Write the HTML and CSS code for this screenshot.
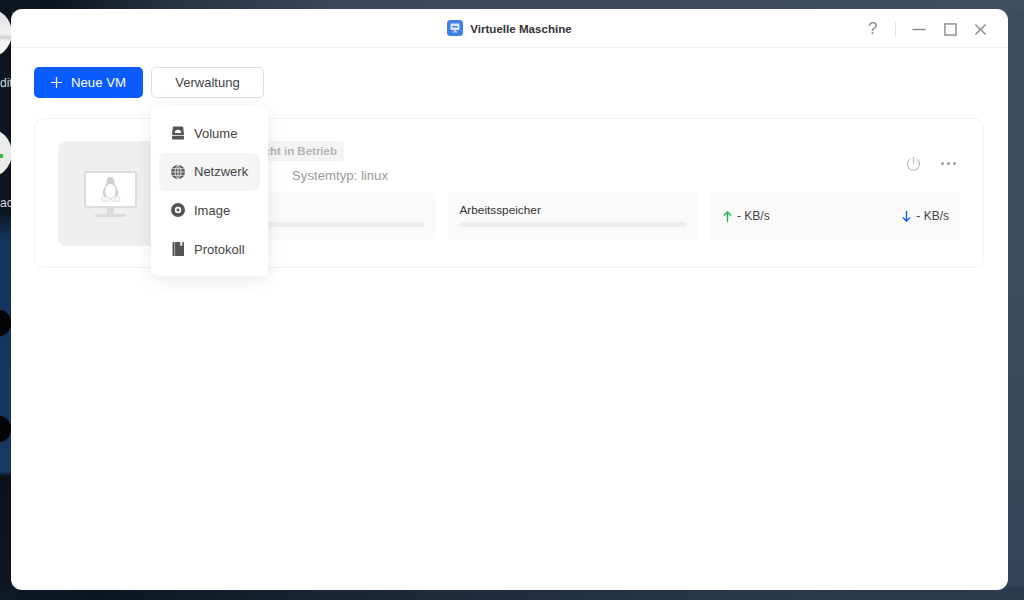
FILE: index.html
```html
<!DOCTYPE html>
<html lang="de">
<head>
<meta charset="utf-8">
<title>Virtuelle Maschine</title>
<link rel="stylesheet" href="styles.css">
</head>
<body>
<div class="desktop">
  <div class="wall-top"></div>
  <div class="wall-bottom"></div>
  <div class="wall-blue"></div>
  <div class="blob blob-a"></div>
  <div class="blob blob-b"></div>
  <div class="app-disc disc-a"></div>
  <span class="app-label label-a">dit</span>
  <div class="app-disc disc-b"><i class="disc-mark"></i></div>
  <span class="app-label label-b">ac</span>

  <main class="window">
    <header class="titlebar">
      <div class="title">
        <svg class="app-icon" viewBox="0 0 16 16"><rect width="16" height="16" rx="3.5" fill="#3d7fe8"/><rect x="3.5" y="3.5" width="9" height="6.5" rx="1" fill="#dbe8fb"/><rect x="5.2" y="6" width="5.6" height="1.4" fill="#3d7fe8"/><rect x="7.2" y="10" width="1.6" height="1.5" fill="#dbe8fb"/><rect x="5.5" y="11.5" width="5" height="1" fill="#dbe8fb"/></svg>
        <span class="title-text">Virtuelle Maschine</span>
      </div>
      <div class="controls">
        <span class="help">?</span>
        <span class="divider"></span>
        <svg class="ctl ctl-min" viewBox="0 0 14 14"><path d="M0 7h14" /></svg>
        <svg class="ctl" viewBox="0 0 14 14"><rect x="1" y="1" width="12" height="12"/></svg>
        <svg class="ctl" viewBox="0 0 14 14"><path d="M1.500 1.500l11 11M12.500 1.500l-11 11"/></svg>
      </div>
    </header>

    <div class="content">
      <div class="toolbar">
        <button class="btn btn-primary"><svg class="plus" viewBox="0 0 12 12"><path d="M6 0v12M0 6h12"/></svg>Neue VM</button>
        <button class="btn btn-plain">Verwaltung</button>
      </div>

      <section class="card">
        <div class="thumb">
          <svg class="monitor" viewBox="0 0 54 46">
            <rect x="1" y="1" width="51" height="35" rx="1.5" fill="#fff" stroke="#dcdcdc" stroke-width="2"/>
            <rect x="23" y="37" width="7" height="6" fill="#dcdcdc"/>
            <rect x="11" y="43" width="31" height="3" rx="1" fill="#dcdcdc"/>
            <path d="M26.500 6c-2.700 0-3.800 2-3.800 4.500 0 2.800-1 3.800-2.200 5.800-1.200 2-1.900 4.300-1.700 6.700l2 4h11.400l2-4c.2-2.400-.5-4.700-1.700-6.700-1.200-2-2.200-3-2.200-5.800C30.300 8 29.200 6 26.500 6z" fill="#d0d0d0"/>
            <ellipse cx="26.500" cy="20.500" rx="5.200" ry="7.500" fill="#fbfbfb"/>
            <ellipse cx="21.500" cy="28" rx="4.600" ry="2.300" fill="#f7f7f7" stroke="#d6d6d6" stroke-width=".8"/>
            <ellipse cx="31.500" cy="28" rx="4.600" ry="2.300" fill="#f7f7f7" stroke="#d6d6d6" stroke-width=".8"/>
          </svg>
        </div>
        <div class="details">
          <div class="top-row">
            <div class="info">
              <span class="tag">Nicht in Betrieb</span>
              <span class="systype">Systemtyp: linux</span>
            </div>
            <div class="actions">
              <svg class="power" viewBox="0 0 16 16"><path d="M8 1v7M4.300 3.300a6.500 6.500 0 1 0 7.400 0"/></svg>
              <span class="more"><i></i><i></i><i></i></span>
            </div>
          </div>
          <div class="stats">
            <div class="stat"><span class="stat-label"></span><span class="bar"></span></div>
            <div class="stat"><span class="stat-label">Arbeitsspeicher</span><span class="bar"></span></div>
            <div class="stat stat-net">
              <span class="rate"><svg class="arrow up" viewBox="0 0 10 12"><path d="M5 12V1M1 5l4-4 4 4"/></svg>- KB/s</span>
              <span class="rate"><svg class="arrow down" viewBox="0 0 10 12"><path d="M5 0v11M1 7l4 4 4-4"/></svg>- KB/s</span>
            </div>
          </div>
        </div>
      </section>
    </div>

    <nav class="menu">
      <a class="menu-item">
        <svg class="mi" viewBox="0 0 14 14"><path d="M2.800 .5h8.400a1 1 0 0 1 1 .9l.8 7.600H1l.8-7.600a1 1 0 0 1 1-.9z" fill="#555"/><rect x="1" y="9.800" width="12" height="3.700" rx=".7" fill="#555"/><path d="M3.800 7a3.200 3.200 0 0 1 6.400 0z" fill="#fff"/></svg>
        Volume
      </a>
      <a class="menu-item is-active">
        <svg class="mi" viewBox="0 0 14 14"><circle cx="7" cy="7" r="7" fill="#555"/><path d="M0 7h14M1.200 3.700h11.600M1.200 10.300h11.600M7 0v14M7 0c-4 3.500-4 10.500 0 14M7 0c4 3.500 4 10.500 0 14" fill="none" stroke="#f5f5f5" stroke-width=".8"/></svg>
        Netzwerk
      </a>
      <a class="menu-item">
        <svg class="mi" viewBox="0 0 14 14"><circle cx="7" cy="7" r="7" fill="#555"/><circle cx="7" cy="7" r="3.200" fill="#fff"/><circle cx="7" cy="7" r="1.400" fill="#555"/></svg>
        Image
      </a>
      <a class="menu-item">
        <svg class="mi" viewBox="0 0 14 14"><rect x="1.500" y="0" width="11.500" height="14" rx=".8" fill="#555"/><path d="M3.600 0v14" stroke="#ddd" stroke-width=".6"/><path d="M9.300 0h2v4l-1-.8-1 .8z" fill="#fff"/></svg>
        Protokoll
      </a>
    </nav>
  </main>
</div>
</body>
</html>
```

FILE: styles.css
```css
* { box-sizing: border-box; }

html, body {
  margin: 0;
  height: 100%;
  overflow: hidden;
}

body {
  font-family: "Liberation Sans", Arial, sans-serif;
  color: #333;
}

.desktop {
  position: relative;
  width: 1024px;
  height: 600px;
  overflow: hidden;
  background: linear-gradient(180deg, #3e4c5f 0, #3c4b5e 50%, #33445a 100%);
}

.wall-top {
  position: absolute;
  left: 0;
  top: 0;
  width: 100%;
  height: 12px;
  background: linear-gradient(90deg, #101822 0, #0c131d 50px, #253140 160px, #3b485a 340px, #404e61 100%);
}

.wall-bottom {
  position: absolute;
  left: 0;
  bottom: 0;
  width: 100%;
  height: 14px;
  background: linear-gradient(90deg, #0e1a26 0, #0d1722 100px, #1a2634 340px, #26354a 700px, #2c3c50 100%);
}

.wall-blue {
  position: absolute;
  left: 0;
  top: 0;
  width: 12px;
  height: 590px;
  background: linear-gradient(180deg, #0d1521 0, #0d1521 212px, #13345a 238px, #17395f 472px, #0b1119 476px, #0e1722 100%);
}

.blob {
  position: absolute;
  left: -12px;
  width: 23px;
  height: 26px;
  border-radius: 50%;
  background: #030507;
}
.blob-a { top: 310px; }
.blob-b { top: 416px; }

.app-disc {
  position: absolute;
  left: -38px;
  width: 50px;
  height: 50px;
  border-radius: 50%;
  background: #e9ece9;
}
.disc-a {
  top: 8px;
  background: linear-gradient(180deg, #d9d9d9 0, #f4f4f4 50%, #cfcfcf 60%, #f2f2f2 64%, #fafafa 100%);
}
.disc-b { top: 128px; }

.disc-mark {
  position: absolute;
  left: 37px;
  top: 26px;
  width: 4px;
  height: 4px;
  background: #3cb54a;
}

.app-label {
  position: absolute;
  left: 0;
  color: #dcdcdc;
  font-size: 12px;
  line-height: 14px;
  white-space: nowrap;
}
.label-a { top: 76px; }
.label-b { top: 196px; }

.window {
  position: absolute;
  left: 11px;
  top: 9px;
  width: 997px;
  height: 581px;
  border-radius: 11px;
  background: #fff;
  display: flex;
  flex-direction: column;
}

.titlebar {
  position: relative;
  flex: none;
  height: 39px;
  border-bottom: 1px solid #f0f0f0;
  display: flex;
  align-items: center;
  justify-content: center;
}

.title {
  display: flex;
  align-items: center;
  gap: 7px;
  font-size: 11.600px;
  font-weight: 700;
  color: #333;
}

.title-text {
  line-height: 16px;
  padding-top: 1px;
}

.app-icon {
  width: 16px;
  height: 16px;
}

.controls {
  position: absolute;
  right: 21px;
  top: 12px;
  display: flex;
  align-items: center;
  gap: 17px;
}

.help {
  font-size: 17px;
  line-height: 16px;
  color: #8a8a8a;
  width: 10px;
}

.divider {
  width: 1px;
  height: 15px;
  background: #e2e2e2;
}

.ctl {
  width: 13px;
  height: 13px;
  fill: none;
  stroke: #888;
  stroke-width: 1.500;
}

.ctl-min {
  width: 14px;
  margin-left: -1px;
  margin-right: 1px;
}

.content {
  flex: 1;
  padding: 19px 23px 0;
  display: flex;
  flex-direction: column;
  gap: 20px;
}

.toolbar {
  display: flex;
  gap: 8px;
}

.btn {
  height: 31px;
  border-radius: 5px;
  font: inherit;
  font-size: 13.200px;
  display: flex;
  align-items: center;
  justify-content: center;
  padding: 0;
}

.btn-primary {
  width: 109px;
  gap: 9px;
  border: none;
  background: #0a5cff;
  color: #fff;
}

.plus {
  width: 11px;
  height: 11px;
  fill: none;
  stroke: #fff;
  stroke-width: 1.300;
}

.btn-plain {
  width: 113px;
  border: 1px solid #dedede;
  background: #fff;
  color: #444;
  font-size: 13px;
}

.card {
  width: 950px;
  height: 150px;
  border: 1px solid #f2f2f2;
  border-radius: 10px;
  padding: 22px 23px 0;
  display: flex;
  gap: 22px;
}

.thumb {
  flex: none;
  width: 105px;
  height: 105px;
  border-radius: 8px;
  background: #efefef;
  display: flex;
  align-items: center;
  justify-content: center;
}

.monitor {
  width: 54px;
  height: 46px;
}

.details {
  flex: 1;
  min-width: 0;
}

.top-row {
  height: 51px;
  position: relative;
  display: flex;
  justify-content: flex-end;
}

.info {
  position: absolute;
  left: 57px;
  top: 0;
  width: 160px;
  display: flex;
  flex-direction: column;
}

.tag {
  align-self: flex-start;
  height: 20px;
  padding: 0 7px;
  border-radius: 3px;
  background: #f4f4f4;
  color: #b5b5b5;
  font-size: 11.500px;
  font-weight: 700;
  line-height: 20px;
  white-space: nowrap;
  margin-left: 3px;
}

.systype {
  margin: 7px 0 0 50px;
  color: #999;
  font-size: 13.200px;
  line-height: 16px;
  white-space: nowrap;
}

.actions {
  display: flex;
  align-items: center;
  gap: 20px;
  height: 44px;
  padding-right: 4px;
}

.power {
  width: 15px;
  height: 15px;
  fill: none;
  stroke: #bdbdbd;
  stroke-width: 1.200;
}

.more {
  display: flex;
  gap: 3px;
}

.more i {
  width: 3px;
  height: 3px;
  border-radius: 50%;
  background: #999;
}

.stats {
  display: grid;
  grid-template-columns: 251px 251px 250px;
  gap: 11.500px;
}

.stat {
  height: 48px;
  border-radius: 4px;
  background: #fafafa;
  padding: 11px 12px 0;
}

.stat-label {
  display: block;
  height: 14px;
  font-size: 11.800px;
  line-height: 14px;
  color: #333;
}

.bar {
  display: block;
  height: 5px;
  margin-top: 5px;
  border-radius: 3px;
  background: #eeeeee;
}

.stat-net {
  display: flex;
  align-items: center;
  justify-content: space-between;
  padding: 0 11px 0 13px;
}

.rate {
  display: flex;
  align-items: center;
  gap: 5px;
  font-size: 12px;
  color: #444;
}

.arrow {
  width: 9px;
  height: 11px;
  fill: none;
  stroke-width: 1.500;
}
.arrow.up { stroke: #22b14c; }
.arrow.down { stroke: #0a5cff; }

.menu {
  position: absolute;
  left: 140px;
  top: 96px;
  width: 117px;
  height: 171px;
  padding: 9px 8px;
  border-radius: 8px;
  background: #fff;
  box-shadow: 0 4px 18px rgba(0, 0, 0, 0.09);
}

.menu-item {
  height: 38.600px;
  padding-left: 12px;
  border-radius: 6px;
  display: flex;
  align-items: center;
  gap: 9px;
  color: #444;
  font-size: 13px;
}

.menu-item.is-active {
  background: #f5f5f5;
}

.mi {
  flex: none;
  width: 14px;
  height: 14px;
}
```
